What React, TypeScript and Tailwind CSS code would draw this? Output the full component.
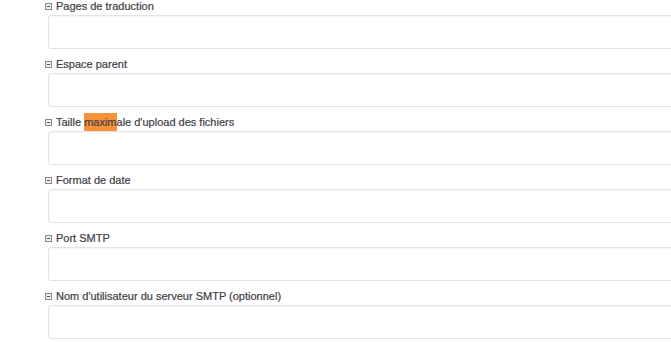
import React from "react";

const fields: React.ReactNode[] = [
  "Pages de traduction",
  "Espace parent",
  <>
    Taille <span className="bg-[#f7923a] py-[3px]">maxim</span>ale d'upload des fichiers
  </>,
  "Format de date",
  "Port SMTP",
  "Nom d'utilisateur du serveur SMTP (optionnel)",
];

function CollapseIcon() {
  return (
    <span className="inline-flex h-[7px] w-[7px] items-center justify-center border border-[#8a8a8a] bg-[#eeeeee] mr-[4px]">
      <span className="block h-px w-[3px] bg-[#555]" />
    </span>
  );
}

function Field({ label }: { label: React.ReactNode }) {
  return (
    <div className="mb-[9px]">
      <div className="flex h-[15px] items-start pl-[45px]">
        <div className="flex items-center h-[12px] leading-[12px] text-[11px] text-[#3d3d46] [-webkit-text-stroke:0.2px_#3d3d46]">
          <CollapseIcon />
          <span>{label}</span>
        </div>
      </div>
      <div className="ml-[48px] h-[34px] w-[700px] rounded-[3px] border border-[#e3e3e6] bg-white shadow-[inset_0_1px_1px_rgba(0,0,0,0.04)]" />
    </div>
  );
}

export default function App() {
  return (
    <div
      className="h-[342px] w-[671px] overflow-hidden bg-white"
      style={{ fontFamily: '"Liberation Sans", Arial, sans-serif' }}
    >
      {fields.map((f, i) => (
        <Field key={i} label={f} />
      ))}
    </div>
  );
}
